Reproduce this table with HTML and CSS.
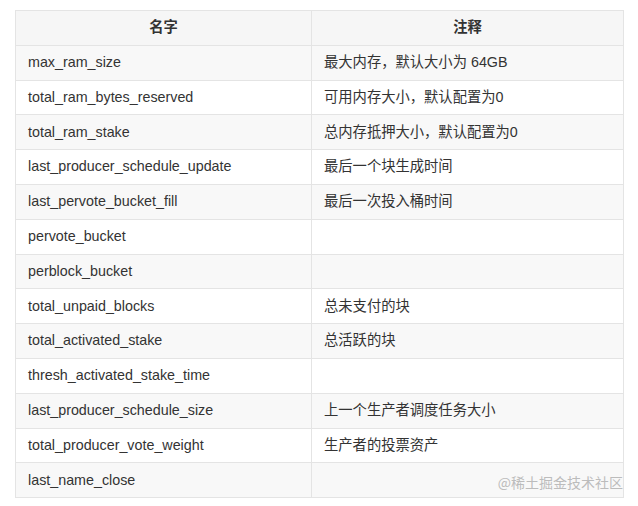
FILE: index.html
```html
<!DOCTYPE html>
<html lang="zh">
<head>
<meta charset="utf-8">
<link rel="stylesheet" href="styles.css">
</head>
<body>
<div class="wrap">
<table class="tbl">
<thead>
<tr><th class="c1">名字</th><th class="c2">注释</th></tr>
</thead>
<tbody>
<tr><td>max_ram_size</td><td>最大内存，默认大小为 64GB</td></tr>
<tr><td>total_ram_bytes_reserved</td><td>可用内存大小，默认配置为0</td></tr>
<tr><td>total_ram_stake</td><td>总内存抵押大小，默认配置为0</td></tr>
<tr><td>last_producer_schedule_update</td><td>最后一个块生成时间</td></tr>
<tr><td>last_pervote_bucket_fill</td><td>最后一次投入桶时间</td></tr>
<tr><td>pervote_bucket</td><td></td></tr>
<tr><td>perblock_bucket</td><td></td></tr>
<tr><td>total_unpaid_blocks</td><td>总未支付的块</td></tr>
<tr><td>total_activated_stake</td><td>总活跃的块</td></tr>
<tr><td>thresh_activated_stake_time</td><td></td></tr>
<tr><td>last_producer_schedule_size</td><td>上一个生产者调度任务大小</td></tr>
<tr><td>total_producer_vote_weight</td><td>生产者的投票资产</td></tr>
<tr><td>last_name_close</td><td></td></tr>
</tbody>
</table>
<div class="watermark">@稀土掘金技术社区</div>
</div>
</body>
</html>
```

FILE: styles.css
```css
html, body {
  margin: 0;
  padding: 0;
  background: #fff;
}
.wrap {
  position: relative;
  width: 608px;
  margin: 10px 0 0 15px;
}
.tbl {
  width: 609px;
  border-collapse: collapse;
  font-family: "Liberation Sans", Arial, "Noto Sans CJK SC", sans-serif;
  font-size: 14.3px;
  color: #333;
}
.tbl th, .tbl td {
  border: 1px solid #e4e4e4;
  line-height: 20px;
  padding: 6.3px 12px 7.5px;
  text-align: left;
}
.tbl th {
  background: #f6f6f6;
  font-weight: bold;
  text-align: center;
}
.tbl .c1 { width: 271px; }
.tbl tbody tr:nth-child(odd) {
  background: #f8f8f8;
}
.watermark {
  position: absolute;
  right: 0;
  bottom: 6px;
  font-family: "Noto Sans CJK SC", sans-serif;
  font-size: 14px;
  line-height: 20px;
  color: #bcbcbc;
}
```
